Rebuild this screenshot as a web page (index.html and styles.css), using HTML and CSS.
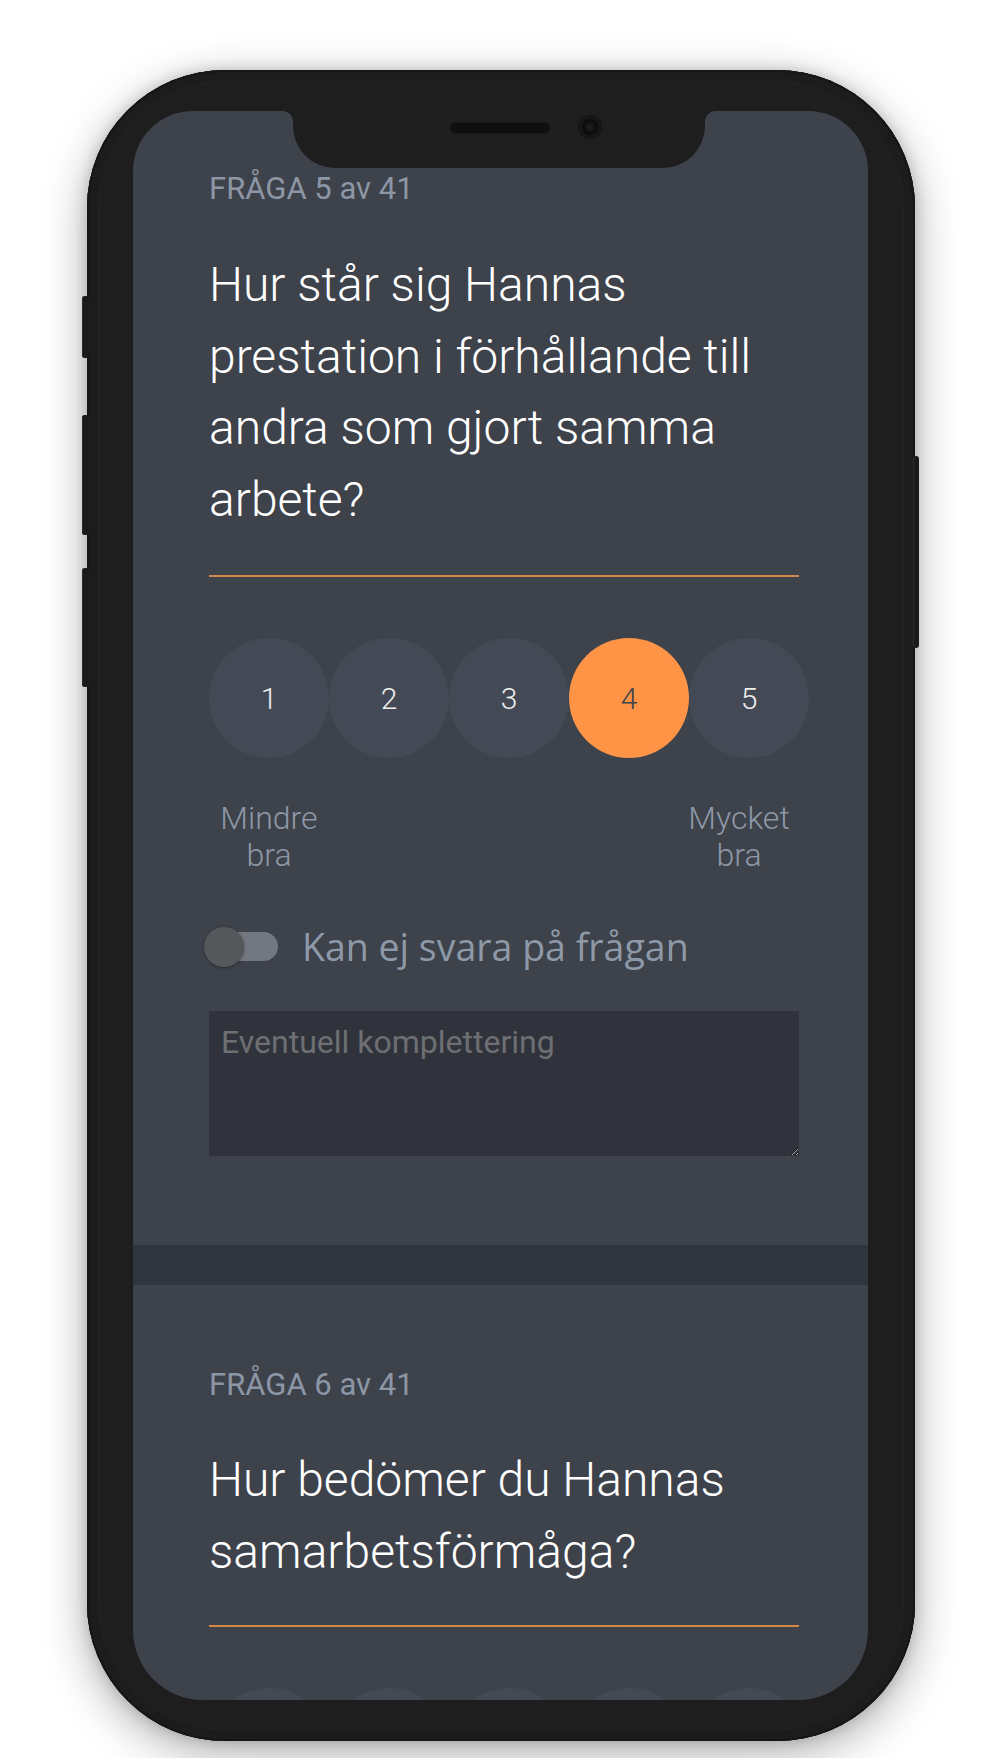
FILE: index.html
```html
<!DOCTYPE html>
<html lang="sv">
<head>
<meta charset="utf-8">
<title>Fråga 5 av 41</title>
<link rel="stylesheet" href="styles.css">
</head>
<body>
<div class="stage">
  <div class="phone">
    <span class="side-btn btn-l1"></span>
    <span class="side-btn btn-l2"></span>
    <span class="side-btn btn-l3"></span>
    <span class="side-btn btn-r1"></span>
    <div class="screen">
      <div class="notch"><span class="speaker"></span><span class="camera"></span></div>

      <section class="question q-first">
        <div class="qnum">FRÅGA 5 av 41</div>
        <h2 class="qtext">Hur står sig Hannas prestation i förhållande till andra som gjort samma arbete?</h2>
        <div class="rule"></div>
        <div class="scale">
          <div class="opt">1</div>
          <div class="opt">2</div>
          <div class="opt">3</div>
          <div class="opt selected">4</div>
          <div class="opt">5</div>
        </div>
        <div class="scale-labels">
          <span class="scale-label">Mindre<br>bra</span>
          <span class="scale-label">Mycket<br>bra</span>
        </div>
        <div class="toggle">
          <span class="switch"><span class="track"></span><span class="thumb"></span></span>
          <span class="toggle-text">Kan ej svara på frågan</span>
        </div>
        <textarea class="note" placeholder="Eventuell komplettering"></textarea>
      </section>

      <div class="band"></div>

      <section class="question q-second">
        <div class="qnum">FRÅGA 6 av 41</div>
        <h2 class="qtext">Hur bedömer du Hannas samarbetsförmåga?</h2>
        <div class="rule rule-2"></div>
        <div class="scale">
          <div class="opt">1</div>
          <div class="opt">2</div>
          <div class="opt">3</div>
          <div class="opt">4</div>
          <div class="opt">5</div>
        </div>
      </section>
    </div>
  </div>
</div>
</body>
</html>
```
FILE: styles.css
```css
* { box-sizing: border-box; }

html, body {
  margin: 0;
  padding: 0;
  background: #ffffff;
}

body {
  width: 1000px;
  height: 1758px;
  overflow: hidden;
  font-family: Roboto, "Liberation Sans", Arial, sans-serif;
}

.stage {
  padding: 70px 0 0 87px;
}

.phone {
  position: relative;
  width: 828px;
  height: 1671px;
  padding: 41px 47px 0 46px;
  border-radius: 138px;
  background: #1e1e1e;
  box-shadow:
    inset 0 0 0 2px #161616,
    inset 0 0 0 11px #1c1c1c,
    inset 0 0 0 12px #232323,
    0 12px 45px rgba(0, 0, 0, 0.32),
    0 0 14px rgba(0, 0, 0, 0.18);
}

.side-btn {
  position: absolute;
  background: #1a1a1a;
  border-radius: 3px;
  box-shadow: inset 1px 0 0 #2a2a2a;
}
.btn-l1 { left: -5px; top: 226px; width: 7px; height: 62px; }
.btn-l2 { left: -5px; top: 345px; width: 7px; height: 120px; }
.btn-l3 { left: -5px; top: 498px; width: 7px; height: 119px; }
.btn-r1 { right: -4px; top: 386px; width: 6px; height: 192px; }

.screen {
  position: relative;
  width: 735px;
  height: 1589px;
  background: #3d424b;
  border-radius: 60px 60px 70px 70px;
  overflow: hidden;
}

.notch {
  position: absolute;
  top: 0;
  left: 160px;
  width: 412px;
  height: 57px;
  background: #1e1e1e;
  border-radius: 0 0 42px 42px;
  z-index: 2;
}
.notch::before,
.notch::after {
  content: "";
  position: absolute;
  top: 0;
  width: 10px;
  height: 10px;
}
.notch::before {
  left: -10px;
  background: radial-gradient(circle at 0 100%, transparent 9.5px, #1e1e1e 10px);
}
.notch::after {
  right: -10px;
  background: radial-gradient(circle at 100% 100%, transparent 9.5px, #1e1e1e 10px);
}

.speaker {
  position: absolute;
  left: 157px;
  top: 11px;
  width: 100px;
  height: 12px;
  border-radius: 6px;
  background: #0f0f0f;
  box-shadow: inset 0 0 0 1px #181818;
}
.camera {
  position: absolute;
  left: 285px;
  top: 4px;
  width: 24px;
  height: 24px;
  border-radius: 50%;
  background: radial-gradient(circle at 50% 50%, #202020 0, #111 5px, #0b0b0b 7px, #181818 9px, #141414 12px);
}

.question {
  padding-left: 76px;
  width: 666px;
}

.q-first {
  padding-top: 60px;
  padding-bottom: 89px;
}

.q-second {
  padding-top: 82px;
}

.qnum {
  font-size: 31px;
  line-height: 36px;
  color: #8c96a5;
}

.qtext {
  margin: 42px 0 0 0;
  font-size: 48px;
  line-height: 71.5px;
  font-weight: 300;
  color: #ffffff;
}
.q-second .qtext { margin-top: 41px; }

.rule {
  margin-top: 40px;
  height: 2px;
  background: #d3864a;
}
.rule-2 { margin-top: 38px; }

.scale {
  display: flex;
  margin-top: 61px;
  width: 600px;
}

.opt {
  flex: 0 0 120px;
  height: 120px;
  border-radius: 50%;
  background: #444a55;
  color: #eeeeee;
  font-size: 30px;
  font-weight: 300;
  display: flex;
  align-items: center;
  justify-content: center;
}
.opt.selected {
  background: #ff9447;
  color: #3e434b;
}

.scale-labels {
  display: flex;
  justify-content: space-between;
  margin-top: 42px;
  width: 590px;
}
.scale-label {
  width: 120px;
  text-align: center;
  font-size: 32px;
  line-height: 37px;
  font-weight: 300;
  color: #8d97a6;
}

.toggle {
  display: flex;
  align-items: center;
  margin-top: 53px;
  height: 40px;
}
.switch {
  position: relative;
  width: 76px;
  height: 40px;
  margin-left: -5px;
  flex: none;
}
.track {
  position: absolute;
  left: 8px;
  top: 5px;
  width: 66px;
  height: 29px;
  border-radius: 15px;
  background: #737780;
}
.thumb {
  position: absolute;
  left: 0;
  top: 0;
  width: 40px;
  height: 40px;
  border-radius: 50%;
  background: #56575a;
  box-shadow: 0 1px 3px rgba(0, 0, 0, 0.35);
}
.toggle-text {
  margin-left: 22px;
  font-family: "Open Sans", "Liberation Sans", sans-serif;
  font-size: 37.5px;
  line-height: 40px;
  color: #8e99a8;
}

.note {
  display: block;
  margin-top: 44px;
  width: 590px;
  height: 145px;
  padding: 13px 12px;
  border: none;
  outline: none;
  background: #30333b;
  color: #cccccc;
  font-family: Roboto, "Liberation Sans", sans-serif;
  font-size: 32px;
  line-height: 37px;
  resize: both;
}
.note::placeholder {
  color: #6e6f72;
}

.band {
  height: 40px;
  background: #31353d;
}
```
